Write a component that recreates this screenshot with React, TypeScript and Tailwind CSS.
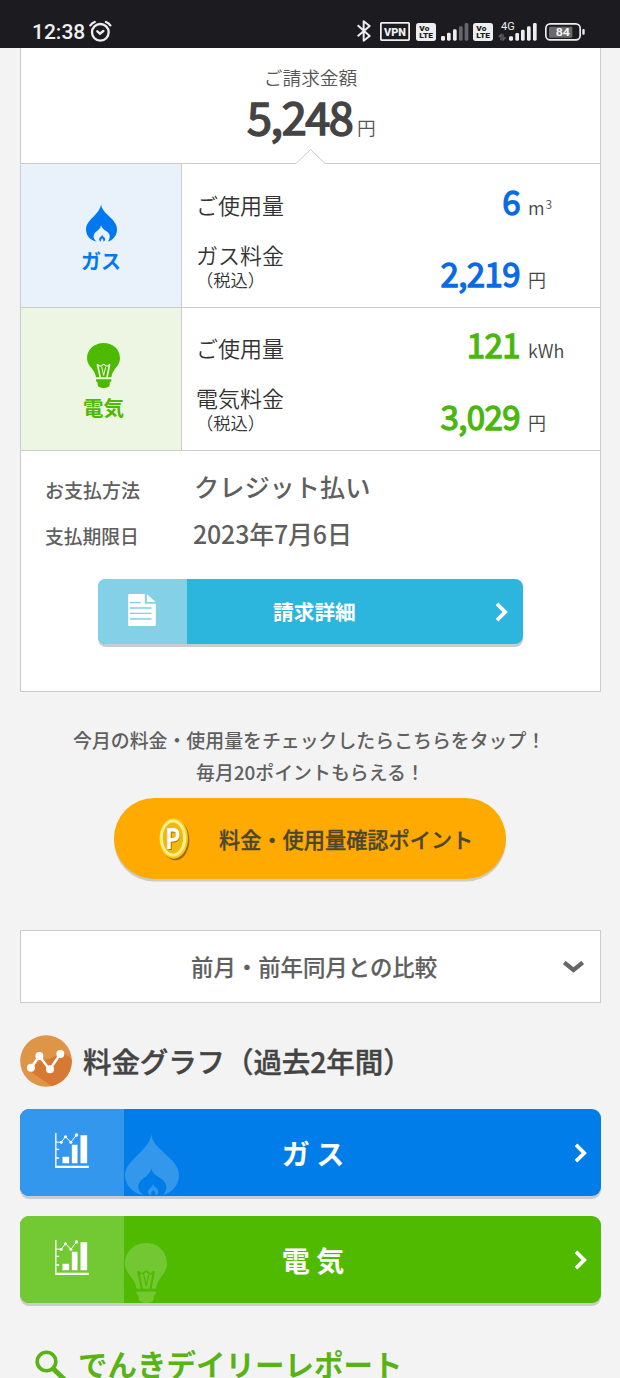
import type { ReactNode } from "react";

function Flame({ className }: { className: string }) {
  return (
    <svg className={className} viewBox="375 118 160 187" fill="currentColor" preserveAspectRatio="none">
      <path d="M453 118C454 165 535 190 535 242C535 272 516 295 488 303C502 284 500 268 486 256C470 244 456 238 453 222C450 238 436 246 424 257C410 270 410 288 430 303C398 297 375 274 375 242C375 196 448 168 453 118Z" />
      <path d="M458 268C459 278 475 282 474 292C474 299 468 303 464 303C467 296 463 292 459 287C455 292 450 296 453 303C447 302 443 298 443 292C443 282 457 280 458 268Z" />
    </svg>
  );
}

function Bulb({ className, id }: { className: string; id: string }) {
  return (
    <svg className={className} viewBox="262 579 99 135" fill="currentColor" preserveAspectRatio="none">
      <mask id={id} maskUnits="userSpaceOnUse" x="262" y="579" width="99" height="135">
        <rect x="262" y="579" width="99" height="135" fill="#fff" />
        <path d="M293 642L302 683M330 642L322 683" fill="none" stroke="#000" strokeWidth="5" />
        <path d="M294 644C300 650 305 649 308 645C311 642 313 642 316 645C319 649 324 650 329 644" fill="none" stroke="#000" strokeWidth="3.5" />
        <path d="M306 650L312 676L318 650" fill="none" stroke="#000" strokeWidth="3" />
      </mask>
      <path mask={`url(#${id})`} d="M312 579C340 579 361 598 361 625C361 650 338 656 335 682H289C286 656 262 650 262 625C262 598 284 579 312 579Z" />
      <path d="M289 688h46v5l-5 5v7c0 5-8 9-18 9s-18-4-18-9v-7l-5-5z" />
    </svg>
  );
}

function ChartIcon() {
  return (
    <svg className="h-[35px] w-[34px]" viewBox="165 115 101 105" fill="#fff">
      <path d="M165 115h4v98h97v7H165zM187 186h20v20h-20zM215 150h17v56h-17zM241 122h20v84h-20zM169 162h8v4h-8zM169 188h8v4h-8z" />
      <path d="M166 142L183 143L196 126L212 143L229 121" fill="none" stroke="#fff" strokeWidth="3" />
      <circle cx="183" cy="143" r="4.5" />
      <circle cx="196" cy="126" r="4.5" />
      <circle cx="212" cy="143" r="4.5" />
      <circle cx="229" cy="121" r="5" />
    </svg>
  );
}

function ChevronRight() {
  return (
    <svg className="h-[20px] w-[12px]" viewBox="0 0 12 20" fill="none" stroke="#fff" strokeWidth="3.8">
      <path d="M1 1.8L9.2 10L1 18.2" />
    </svg>
  );
}

function DocIcon() {
  return (
    <svg className="h-[32px] w-[28px]" viewBox="385 432 83 96">
      <path fill="#fff" d="M388 432H435V461H468V525Q468 528 465 528H388Q385 528 385 525V435Q385 432 388 432ZM441 432L467 456H441Z" />
      <path stroke="#84d0e7" strokeWidth="4" d="M390 458h33M390 474h65M390 490h65M390 507h65" />
    </svg>
  );
}

function Coin() {
  return (
    <svg className="h-[44px] w-[31px]" viewBox="298 304 93 132">
      <ellipse cx="347" cy="373" rx="42" ry="61" fill="#9c6a0c" />
      <ellipse cx="342" cy="368" rx="43" ry="61" fill="#ffc61a" />
      <ellipse cx="340" cy="367" rx="35" ry="51" fill="#f0b912" stroke="#fff08a" strokeWidth="9" />
      <text x="323" y="403" fontFamily="Roboto, sans-serif" fontWeight="700" fontSize="88" textLength="40" lengthAdjust="spacingAndGlyphs" fill="#a8730a">P</text>
      <text x="319" y="400" fontFamily="Roboto, sans-serif" fontWeight="700" fontSize="88" textLength="43" lengthAdjust="spacingAndGlyphs" fill="#fff">P</text>
    </svg>
  );
}

function GraphBadge() {
  return (
    <svg className="h-[52px] w-[52px]" viewBox="60 359 156 156">
      <clipPath id="badge">
        <circle cx="138" cy="437" r="77.5" />
      </clipPath>
      <g clipPath="url(#badge)">
        <rect x="60" y="359" width="156" height="156" fill="#df9547" />
        <path d="M85 464L118 438L150 430L188 410L240 450V530H180Z" fill="#d77932" />
      </g>
      <path d="M93 457L118 422L149 463L181 416" fill="none" stroke="#fff" strokeWidth="7.5" />
      <circle cx="93" cy="457" r="12" fill="#fff" />
      <circle cx="118" cy="422" r="12" fill="#fff" />
      <circle cx="150" cy="462" r="12" fill="#fff" />
      <circle cx="181" cy="416" r="12" fill="#fff" />
    </svg>
  );
}

function VoLte({ className }: { className: string }) {
  return (
    <svg className={className} viewBox="228 69 60 54">
      <rect x="228" y="69" width="60" height="54" rx="8" fill="#eee" />
      <g fontFamily="Roboto, sans-serif" fontWeight="900" fill="#1b1b20">
        <text x="238" y="93" fontSize="23" textLength="30" lengthAdjust="spacingAndGlyphs">Vo</text>
        <text x="238" y="115" fontSize="23" textLength="41" lengthAdjust="spacingAndGlyphs">LTE</text>
      </g>
    </svg>
  );
}

function StatusBar() {
  return (
    <header className="flex h-[48px] items-start bg-[#1b1b20] pl-[32px] pt-[20px]">
      <div className="w-[57px] font-['Roboto'] text-[21px] font-medium leading-[24px] text-[#f0f0f0]">12:38</div>
      <svg className="h-[22px] w-[23px]" viewBox="268 60 69 66" fill="none" stroke="#eee" strokeWidth="7" strokeLinecap="round">
        <circle cx="302" cy="97" r="25" />
        <path d="M272 76Q277 69 285 66M319 66Q327 69 332 76M293 94L301 101L311 93" />
      </svg>
      <svg className="ml-[245px] h-[22px] w-[14px]" viewBox="52 61 42 66" fill="none" stroke="#eee" strokeWidth="6" strokeLinejoin="round">
        <path d="M54 77L90 109L72 123V65L90 79L54 110" />
      </svg>
      <svg className="ml-[9px] mt-[2px] h-[19px] w-[30px]" viewBox="120 66 90 57">
        <rect x="122.500" y="68.500" width="85" height="52" rx="4" fill="none" stroke="#eee" strokeWidth="5.5" />
        <text x="132" y="107" fontFamily="Roboto, sans-serif" fontWeight="900" fontSize="33" textLength="66" lengthAdjust="spacingAndGlyphs" fill="#eee">VPN</text>
      </svg>
      <VoLte className="ml-[6px] mt-[3px] h-[18px] w-[20px]" />
      <svg className="ml-[5px] mt-[3px] h-[18px] w-[28px]" viewBox="303 69 84 54">
        <g fill="#eee">
          <rect x="303" y="108" width="12" height="14" rx="4" />
          <rect x="321" y="98" width="11" height="24" rx="4" />
          <rect x="339" y="88" width="11" height="34" rx="4" />
        </g>
        <g fill="#65656a">
          <rect x="357" y="79" width="11" height="43" rx="4" />
          <rect x="374" y="69" width="11" height="53" rx="4" />
        </g>
      </svg>
      <VoLte className="ml-[4px] mt-[3px] h-[18px] w-[20px]" />
      <svg className="-mt-[3px] ml-[5px] h-[24px] w-[39px]" viewBox="475 51 117 72">
        <text x="484" y="90" fontFamily="Roboto, sans-serif" fontSize="34" textLength="41" lengthAdjust="spacingAndGlyphs" fill="#eee">4G</text>
        <path d="M477 111L484 104V121M490 103V120L498 112" fill="none" stroke="#65656a" strokeWidth="4" />
        <g fill="#eee">
          <rect x="508" y="109" width="12" height="13" rx="4" />
          <rect x="527" y="99" width="11" height="23" rx="4" />
          <rect x="544" y="89" width="11" height="33" rx="4" />
          <rect x="562" y="79" width="11" height="43" rx="4" />
          <rect x="580" y="69" width="11" height="53" rx="4" />
        </g>
      </svg>
      <svg className="ml-[8px] mt-[3px] h-[18px] w-[40px]" viewBox="615 68 120 54">
        <rect x="617.500" y="70.500" width="103" height="48" rx="13" fill="none" stroke="#eee" strokeWidth="5" />
        <rect x="627" y="79" width="70" height="33" rx="3" fill="#69696e" />
        <rect x="727" y="86" width="7" height="17" rx="3" fill="#eee" />
        <text x="647" y="108" fontFamily="Roboto, sans-serif" fontWeight="700" fontSize="35" textLength="43" lengthAdjust="spacingAndGlyphs" fill="#f4f4f4">84</text>
      </svg>
    </header>
  );
}

type UsageProps = {
  icon: ReactNode;
  iconClass: string;
  bodyClass: string;
  feeLabel: string;
  usage: string;
  unit: ReactNode;
  fee: string;
  valueClass: string;
};

function UsageRow({ icon, iconClass, bodyClass, feeLabel, usage, unit, fee, valueClass }: UsageProps) {
  const value = `w-[340px] text-right text-[33px] font-normal leading-[40px] tracking-[-0.6px] [-webkit-text-stroke:1.3px] ${valueClass}`;
  return (
    <div className="flex border-b border-[#ccc]">
      <div className={`flex w-[161px] flex-col items-center border-r border-[#ccc] ${iconClass}`}>{icon}</div>
      <div className={`flex grow pl-[14px] ${bodyClass}`}>
        <div className="w-[100px] shrink-0 pt-[8px] text-[22px] font-[350] leading-[30px] text-[#333]">
          <div>ご使用量</div>
          <div className="mt-[20px]">{feeLabel}</div>
          <div className="-mt-[0.5px] text-[17.3px] leading-[22px]">（税込）</div>
        </div>
        <div className="-ml-[116px] flex flex-col">
          <div className="flex items-baseline">
            <div className={value}>{usage}</div>
            <div className="ml-[8px] text-[18px] font-[350] text-[#444]">{unit}</div>
          </div>
          <div className="mt-[32px] flex items-baseline">
            <div className={value}>{fee}</div>
            <div className="ml-[8px] text-[18px] font-[350] text-[#444]">円</div>
          </div>
        </div>
      </div>
    </div>
  );
}

function GraphButton({ label, color, pane, mark }: { label: string; color: string; pane: string; mark: ReactNode }) {
  return (
    <button className={`flex h-[87px] w-[581px] overflow-hidden rounded-[9px] shadow-[0_3px_0_#c8cbd0] ${color}`}>
      <span className={`flex w-[104px] shrink-0 justify-center pt-[24px] pr-px ${pane}`}>
        <ChartIcon />
      </span>
      <span className="h-full w-[119px] shrink-0 pl-px text-white/20">{mark}</span>
      <span className="w-[140px] text-center text-[28px] font-bold leading-[88px] text-white">{label}</span>
      <span className="ml-auto self-center pr-[14px]">
        <ChevronRight />
      </span>
    </button>
  );
}

export default function App() {
  return (
    <div className="h-[1378px] w-[620px] overflow-hidden bg-[#f3f3f3] font-['Noto_Sans_CJK_JP',sans-serif] whitespace-nowrap text-[#5f5f5f]">
      <StatusBar />
      <main className="pl-[20px] pr-[19px]">
        <section className="h-[644px] border border-t-0 border-[#ccc] bg-white">
          <div className="relative h-[116px] border-b border-[#ccc] pt-[15px]">
            <div className="text-center text-[18.7px] font-[350] leading-[28px] text-[#555]">ご請求金額</div>
            <div className="flex items-baseline pl-[226px] leading-[50px]">
              <span className="w-[110px] text-[45px] tracking-[-1.4px] text-[#444] [-webkit-text-stroke:1.6px]">5,248</span>
              <span className="text-[18.700px] font-[350] text-[#555]">円</span>
            </div>
            <svg className="absolute -bottom-px left-[275px] h-[15px] w-[29px]" viewBox="0 0 29 15">
              <path d="M0 14.5L14.500 0.5L29 14.5V15H0Z" fill="#fff" />
              <path d="M0 14.5L14.500 0.5L29 14.500" fill="none" stroke="#ccc" />
            </svg>
          </div>
          <UsageRow
            iconClass="bg-[#e9f1fb] h-[143px] pt-[40px] text-[#0078f0]"
            bodyClass="pt-[17px]"
            icon={
              <>
                <Flame className="h-[38px] w-[31px]" />
                <span className="mt-[4px] text-[20px] font-bold leading-[30px]">ガス</span>
              </>
            }
            feeLabel="ガス料金"
            usage="6"
            unit={<>m<sup className="relative -top-[6px] ml-px align-baseline text-[12px] leading-none">3</sup></>}
            fee="2,219"
            valueClass="text-[#0a6ae4]"
          />
          <UsageRow
            iconClass="bg-[#edf6e3] h-[142px] pt-[35px] pl-[5px] text-[#4dba00]"
            bodyClass="pt-[16px]"
            icon={
              <>
                <Bulb id="bulb-small" className="h-[45px] w-[33px]" />
                <span className="mt-[4px] text-[20.500px] font-bold leading-[30px]">電気</span>
              </>
            }
            feeLabel="電気料金"
            usage="121"
            unit="kWh"
            fee="3,029"
            valueClass="text-[#49b70c]"
          />
          <dl className="grid h-[102px] grid-cols-[149px_1fr] grid-rows-[47px_47px] content-start pt-[15px] pl-[24px] font-medium leading-[40px]">
            <dt className="pt-[4px] text-[19px]">お支払方法</dt>
            <dd className="text-[25.2px]">クレジット払い</dd>
            <dt className="pt-[3px] text-[18.8px]">支払期限日</dt>
            <dd className="-ml-px text-[25px] tracking-[-0.2px]">2023年7月6日</dd>
          </dl>
          <button className="mt-[26px] ml-[77px] flex h-[65px] w-[425px] overflow-hidden rounded-[8px] bg-[#2db6dd] shadow-[0_3px_0_#c8cbd0]">
            <span className="flex h-full w-[89px] items-center justify-center bg-[#84d0e7] pr-[2px] pb-[3px]">
              <DocIcon />
            </span>
            <span className="ml-[86px] text-[20.700px] font-bold leading-[65px] text-white">請求詳細</span>
            <span className="ml-auto self-center pr-[15px]">
              <ChevronRight />
            </span>
          </button>
        </section>

        <p className="mt-[32px] pl-[53px] text-[18.900px] font-medium leading-[32px]">今月の料金・使用量をチェックしたらこちらをタップ！</p>
        <p className="pl-[176px] text-[18.900px] font-medium leading-[32px]">毎月20ポイントもらえる！</p>
        <button className="mt-[10px] ml-[94px] flex h-[81px] w-[392px] items-center rounded-full bg-[#ffaa00] pl-[45px] shadow-[0_2.500px_0_#cfccc5]">
          <Coin />
          <span className="ml-[29px] text-[21.200px] font-medium text-[#4b4630] [-webkit-text-stroke:0.3px]">料金・使用量確認ポイント</span>
        </button>

        <button className="mt-[51px] flex h-[73px] w-[581px] items-center border border-[#ccc] bg-white pl-[170px]">
          <span className="text-[22.400px] font-medium leading-[71px] [-webkit-text-stroke:0.2px]">前月・前年同月との比較</span>
          <svg className="ml-auto mr-[16px] h-[12px] w-[21px]" viewBox="0 0 21 12" fill="none" stroke="#666" strokeWidth="4.2">
            <path d="M1.300 1.500L10.500 9L19.700 1.500" />
          </svg>
        </button>

        <div className="mt-[31px] flex h-[54px] items-center">
          <GraphBadge />
          <h2 className="ml-[11px] text-[28.500px] font-medium tracking-[-0.1px] text-[#444] [-webkit-text-stroke:0.4px]">料金グラフ（過去2年間）</h2>
        </div>

        <div className="mt-[21px] flex flex-col gap-[20px]">
          <GraphButton
            label="ガ ス"
            color="bg-[#007de8]"
            pane="bg-[#3397ed]"
            mark={<Flame className="mt-[25px] h-[62px] w-[54px]" />}
          />
          <GraphButton
            label="電 気"
            color="bg-[#4fba00]"
            pane="bg-[#72c933]"
            mark={<Bulb id="bulb-large" className="mt-[27px] h-[60px] w-[42px]" />}
          />
        </div>

        <div className="mt-[41px] flex items-start pl-[15px] text-[#58b415]">
          <svg className="mt-[6px] h-[33px] w-[31px]" viewBox="0 0 31 33" fill="none" stroke="currentColor" strokeWidth="3.600">
            <circle cx="11.500" cy="11.500" r="9.300" />
            <path d="M18 18.500L30 30" strokeWidth="5" />
          </svg>
          <span className="ml-[12px] text-[29.500px] font-bold leading-[38px]">でんきデイリーレポート</span>
        </div>
      </main>
    </div>
  );
}
